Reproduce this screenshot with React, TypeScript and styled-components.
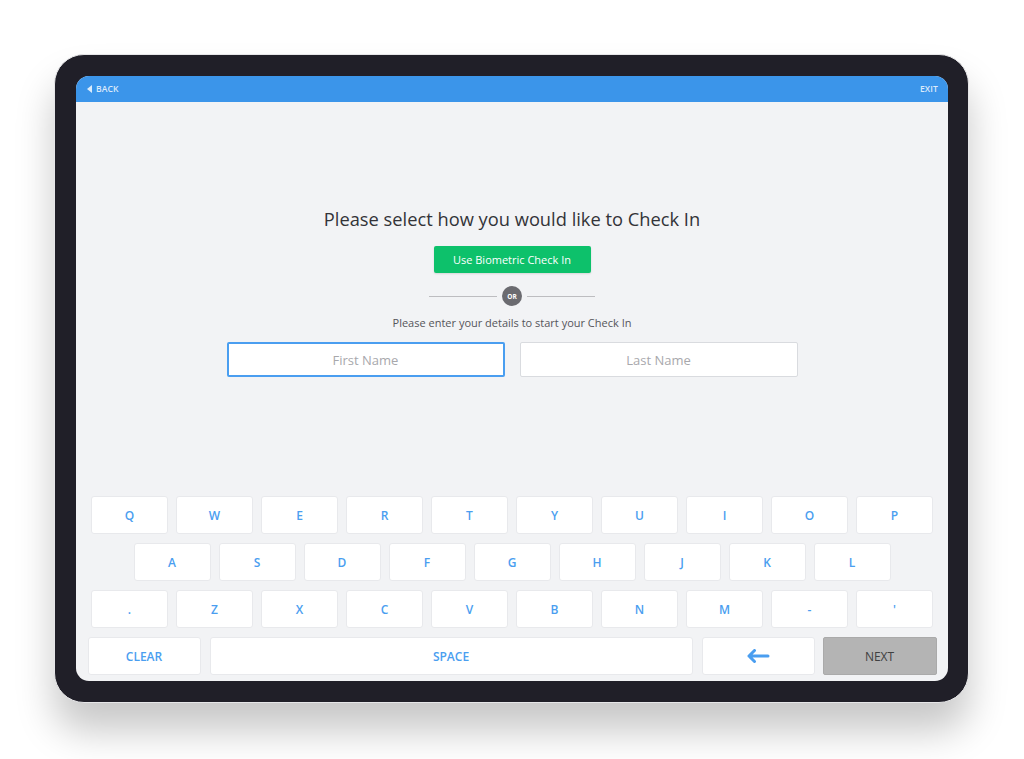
import React from 'react';
import styled, { createGlobalStyle } from 'styled-components';

const GlobalStyle = createGlobalStyle`
    html, body {
        margin: 0;
        padding: 0;
        background: #ffffff;
        font-family: "Open Sans", "Noto Sans", sans-serif;
    }
`;

const rows = [
    ['Q', 'W', 'E', 'R', 'T', 'Y', 'U', 'I', 'O', 'P'],
    ['A', 'S', 'D', 'F', 'G', 'H', 'J', 'K', 'L'],
    ['.', 'Z', 'X', 'C', 'V', 'B', 'N', 'M', '-', "'"],
];

const App = () => {
    return (
        <>
            <GlobalStyle />
            <Page>
                <Tablet>
                    <Screen>
                        <TopBar>
                            <BarLink>
                                <svg width="5" height="8" viewBox="0 0 5 8">
                                    <path d="M5 0 L0 4 L5 8 Z" fill="currentColor" />
                                </svg>
                                BACK
                            </BarLink>
                            <BarLink>EXIT</BarLink>
                        </TopBar>
                        <Main>
                            <Title>Please select how you would like to Check In</Title>
                            <GreenButton>Use Biometric Check In</GreenButton>
                            <Divider>
                                <Line />
                                <OrBadge>OR</OrBadge>
                                <Line />
                            </Divider>
                            <Subtitle>Please enter your details to start your Check In</Subtitle>
                            <Inputs>
                                <Field $active placeholder="First Name" />
                                <Field placeholder="Last Name" />
                            </Inputs>
                        </Main>
                        <Keyboard>
                            {rows.map((row, i) => (
                                <KeyRow key={i}>
                                    {row.map((k) => (
                                        <Key key={k}>{k}</Key>
                                    ))}
                                </KeyRow>
                            ))}
                            <BottomRow>
                                <Key $width={113}>CLEAR</Key>
                                <Key $width={483} $gap={9}>SPACE</Key>
                                <Key $width={113} $gap={9}>
                                    <svg width="24" height="14" viewBox="0 0 24 14">
                                        <path d="M22 7 H3 M8.5 1.5 L3 7 L8.5 12.5" fill="none" stroke="currentColor" strokeWidth="3" strokeLinecap="round" strokeLinejoin="round" />
                                    </svg>
                                </Key>
                                <NextKey>NEXT</NextKey>
                            </BottomRow>
                        </Keyboard>
                    </Screen>
                </Tablet>
            </Page>
        </>
    );
};

export default App;

const Page = styled.div`
    width: 1024px;
    height: 759px;
    overflow: hidden;
    padding: 54px 0 0 54px;
    box-sizing: border-box;
`;

const Tablet = styled.div`
    width: 915px;
    height: 649px;
    box-sizing: border-box;
    padding: 21px 20px 21px 21px;
    background: #201f28;
    border: 1px solid #e6e6e8;
    border-radius: 30px;
    box-shadow: 0 28px 38px rgba(0, 0, 0, 0.22);
    display: flex;
`;

const Screen = styled.div`
    flex: 1;
    display: flex;
    flex-direction: column;
    background: #f2f3f5;
    border-radius: 13px;
    overflow: hidden;
`;

const TopBar = styled.div`
    height: 26px;
    flex-shrink: 0;
    background: #3b95ea;
    display: flex;
    align-items: center;
    justify-content: space-between;
    padding: 0 10px 0 11px;
`;

const BarLink = styled.span`
    display: flex;
    align-items: center;
    gap: 4px;
    color: rgba(255, 255, 255, 0.82);
    font-size: 8.6px;
    font-weight: 600;
    letter-spacing: 0.1px;
`;

const Main = styled.div`
    flex: 1;
    display: flex;
    flex-direction: column;
    align-items: center;
    padding-top: 104px;
`;

const Title = styled.h1`
    margin: 0;
    font-size: 18.3px;
    line-height: 26px;
    font-weight: 400;
    color: #333338;
`;

const GreenButton = styled.button`
    margin-top: 14px;
    width: 157px;
    height: 27px;
    border: none;
    border-radius: 2px;
    background: #0dc16b;
    color: #ffffff;
    font-family: "Open Sans", sans-serif;
    font-size: 11px;
    box-shadow: 0 1px 2px rgba(0, 0, 0, 0.12);
`;

const Divider = styled.div`
    margin-top: 13px;
    display: flex;
    align-items: center;
    gap: 5px;
`;

const Line = styled.div`
    width: 68px;
    height: 1px;
    background: #bdbdc0;
`;

const OrBadge = styled.div`
    width: 20px;
    height: 20px;
    border-radius: 50%;
    background: #6b6b70;
    color: #ffffff;
    font-size: 6.5px;
    font-weight: 700;
    display: flex;
    align-items: center;
    justify-content: center;
`;

const Subtitle = styled.p`
    margin: 9px 0 0;
    font-size: 11px;
    line-height: 16px;
    color: #55555a;
`;

const Inputs = styled.div`
    margin-top: 11px;
    display: flex;
    gap: 15px;
`;

const Field = styled.input<{ $active?: boolean }>`
    width: 278px;
    height: 35px;
    box-sizing: border-box;
    background: #ffffff;
    border: ${(p) => (p.$active ? '2px solid #4a9ef0' : '1px solid #d9dbdf')};
    border-radius: 2px;
    text-align: center;
    font-family: "Open Sans", sans-serif;
    font-size: 13px;
    outline: none;
    &::placeholder {
        color: #a8a8ac;
    }
`;

const Keyboard = styled.div`
    display: flex;
    flex-direction: column;
    align-items: center;
    gap: 9px;
    padding-bottom: 6px;
`;

const KeyRow = styled.div`
    display: flex;
    gap: 8px;
`;

const BottomRow = styled.div`
    display: flex;
`;

const Key = styled.div<{ $width?: number; $gap?: number }>`
    width: ${(p) => p.$width ?? 77}px;
    margin-left: ${(p) => p.$gap ?? 0}px;
    height: 38px;
    box-sizing: border-box;
    background: #ffffff;
    border: 1px solid #e8e9ec;
    border-radius: 3px;
    display: flex;
    align-items: center;
    justify-content: center;
    color: #4a9ef0;
    font-size: 12px;
    font-weight: 600;
`;

const NextKey = styled.div`
    width: 114px;
    margin-left: 8px;
    height: 38px;
    box-sizing: border-box;
    background: #b4b4b4;
    border: 1px solid #aaaaaa;
    border-radius: 2px;
    display: flex;
    align-items: center;
    justify-content: center;
    color: #404040;
    font-size: 12px;
`;
